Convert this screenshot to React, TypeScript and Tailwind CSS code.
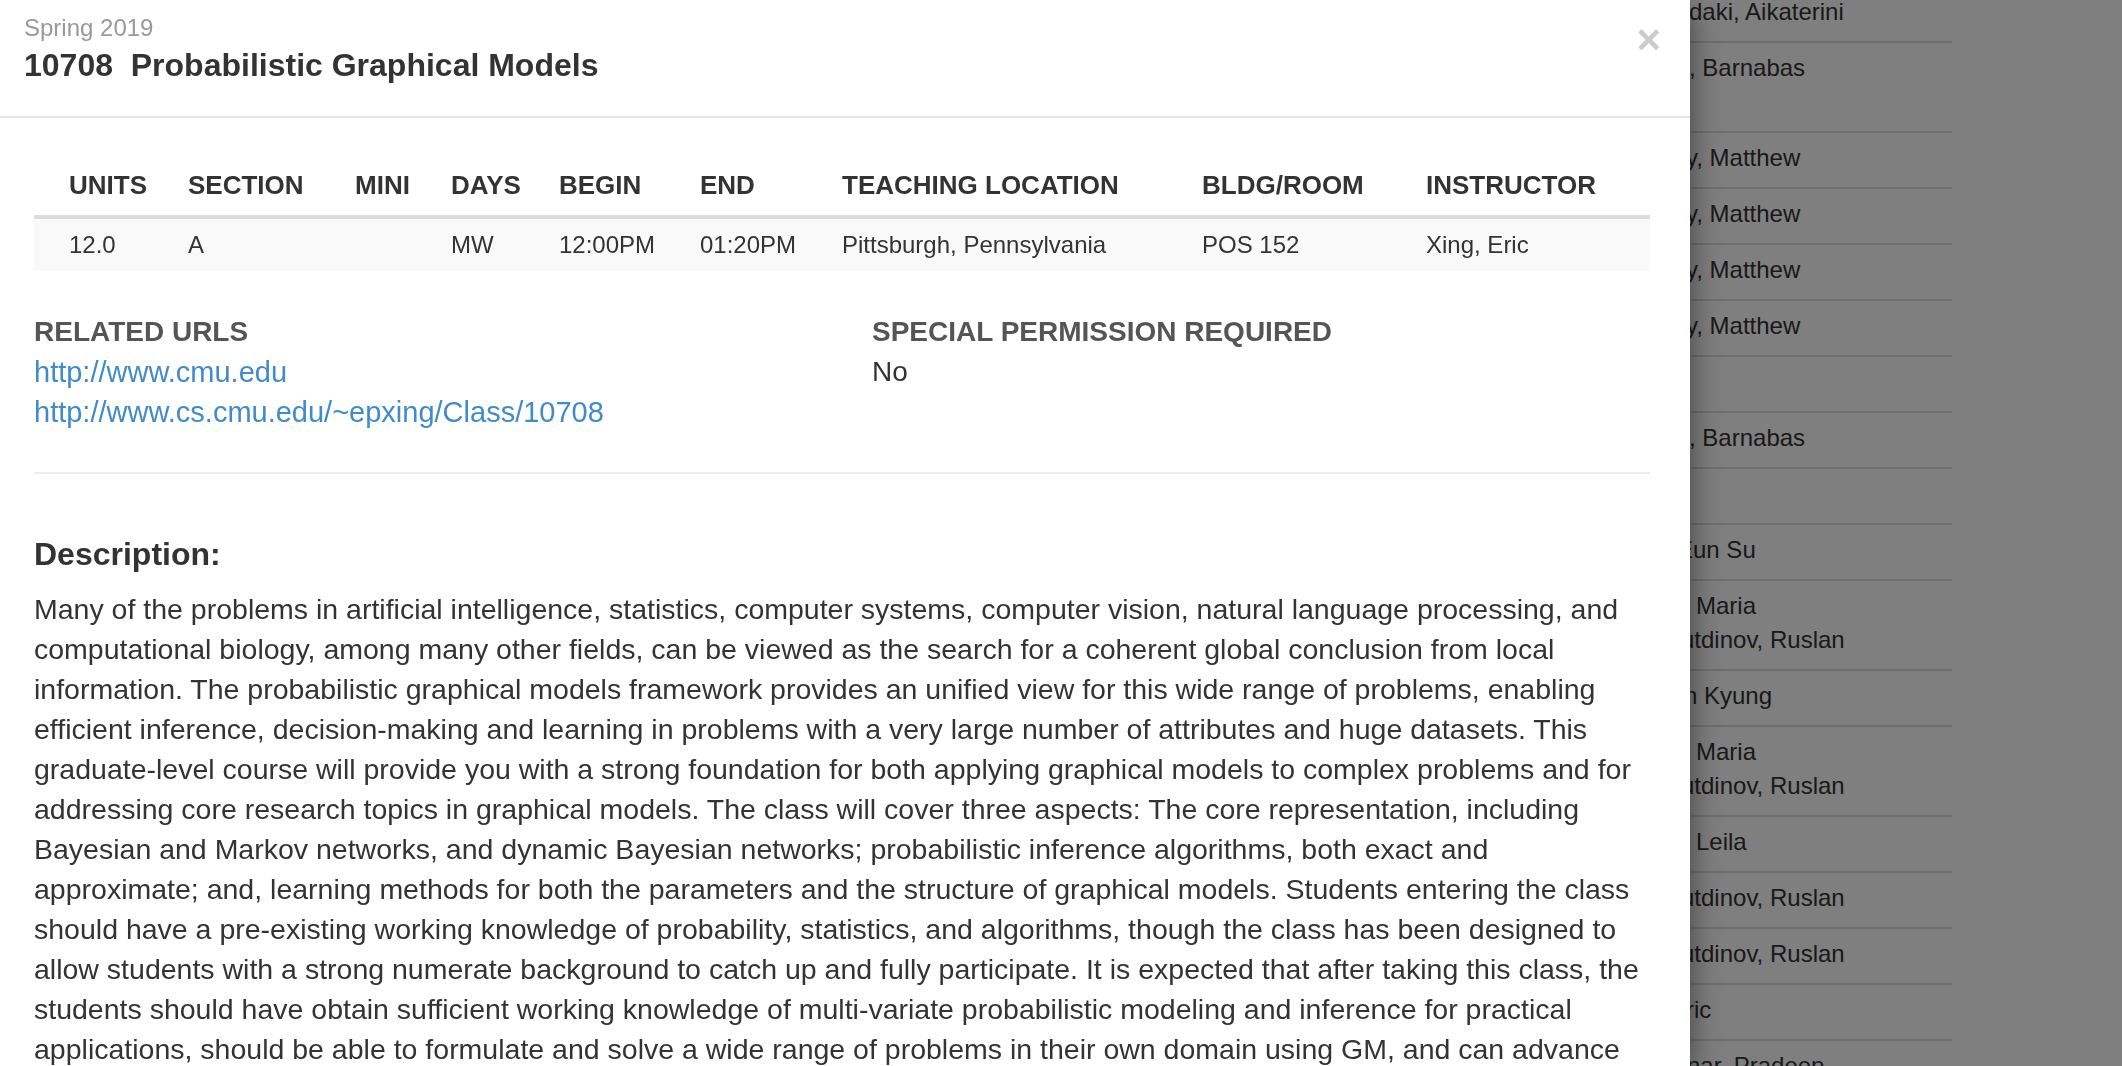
import React from "react";

// 뒤에 깔린 목록 (모달에 가려져 오른쪽 일부만 보임)
const bgRows: { text: string; ml: string }[][] = [
  [{ text: "daki, Aikaterini", ml: "ml-[29px]" }],
  [
    { text: ", Barnabas", ml: "ml-[29px]" },
    { text: "\u00a0", ml: "ml-[29px]" },
  ],
  [{ text: "y, Matthew", ml: "ml-[26px]" }],
  [{ text: "y, Matthew", ml: "ml-[26px]" }],
  [{ text: "y, Matthew", ml: "ml-[26px]" }],
  [{ text: "y, Matthew", ml: "ml-[26px]" }],
  [{ text: "\u00a0", ml: "ml-[26px]" }],
  [{ text: ", Barnabas", ml: "ml-[29px]" }],
  [{ text: "\u00a0", ml: "ml-[26px]" }],
  [{ text: "Eun Su", ml: "ml-[17px]" }],
  [
    { text: "Maria", ml: "ml-[36px]" },
    { text: "utdinov, Ruslan", ml: "ml-[21px]" },
  ],
  [{ text: "n Kyung", ml: "ml-[24px]" }],
  [
    { text: "Maria", ml: "ml-[36px]" },
    { text: "utdinov, Ruslan", ml: "ml-[21px]" },
  ],
  [{ text: "Leila", ml: "ml-[36px]" }],
  [{ text: "utdinov, Ruslan", ml: "ml-[21px]" }],
  [{ text: "utdinov, Ruslan", ml: "ml-[21px]" }],
  [{ text: "Eric", ml: "ml-[10px]" }],
  [{ text: "nar, Pradeep", ml: "ml-[27px]" }],
];

const columns = [
  { label: "UNITS", value: "12.0", w: "w-[138px]", first: true },
  { label: "SECTION", value: "A", w: "w-[167px]" },
  { label: "MINI", value: "", w: "w-[96px]" },
  { label: "DAYS", value: "MW", w: "w-[108px]" },
  { label: "BEGIN", value: "12:00PM", w: "w-[141px]" },
  { label: "END", value: "01:20PM", w: "w-[142px]" },
  { label: "TEACHING LOCATION", value: "Pittsburgh, Pennsylvania", w: "w-[360px]" },
  { label: "BLDG/ROOM", value: "POS 152", w: "w-[224px]" },
  { label: "INSTRUCTOR", value: "Xing, Eric", w: "w-[240px]" },
];

const description =
  "Many of the problems in artificial intelligence, statistics, computer systems, computer vision, natural language processing, and computational biology, among many other fields, can be viewed as the search for a coherent global conclusion from local information. The probabilistic graphical models framework provides an unified view for this wide range of problems, enabling efficient inference, decision-making and learning in problems with a very large number of attributes and huge datasets. This graduate-level course will provide you with a strong foundation for both applying graphical models to complex problems and for addressing core research topics in graphical models. The class will cover three aspects: The core representation, including Bayesian and Markov networks, and dynamic Bayesian networks; probabilistic inference algorithms, both exact and approximate; and, learning methods for both the parameters and the structure of graphical models. Students entering the class should have a pre-existing working knowledge of probability, statistics, and algorithms, though the class has been designed to allow students with a strong numerate background to catch up and fully participate. It is expected that after taking this class, the students should have obtain sufficient working knowledge of multi-variate probabilistic modeling and inference for practical applications, should be able to formulate and solve a wide range of problems in their own domain using GM, and can advance into more specialized technical literature by themselves.";

export default function App() {
  return (
    <div className="relative h-screen overflow-hidden bg-white font-['Liberation_Sans',Arial,sans-serif] text-[#333]">
      {/* 뒤 페이지 목록 */}
      <div className="-mt-[15px] flex">
        <div className="w-[1660px] shrink-0" />
        <div className="w-[292px]">
          {bgRows.map((row, i) => (
            <div
              key={i}
              className="border-t-2 border-[#ddd] pt-[8px] pb-[12px] text-[24px] leading-[34px] whitespace-nowrap"
            >
              {row.map((line, j) => (
                <div key={j} className={line.ml}>
                  {line.text}
                </div>
              ))}
            </div>
          ))}
        </div>
      </div>

      {/* 어두운 배경 */}
      <div className="fixed inset-0 bg-black/50" />

      {/* 모달 */}
      <div className="fixed left-0 top-0 bottom-0 w-[1690px] bg-white shadow-[0_10px_30px_rgba(0,0,0,0.5)]">
        {/* 모달 헤더 */}
        <div className="flex items-start justify-between border-b-2 border-[#e5e5e5] pl-[24px] pr-[29px] pt-[11px] pb-[31px]">
          <div>
            <div className="text-[24px] leading-[34px] text-[#999]">Spring 2019</div>
            <div className="text-[32px] font-bold leading-[40px] text-[#333]">
              10708&nbsp;&nbsp;Probabilistic Graphical Models
            </div>
          </div>
          <button className="mt-[8px] text-[42px] font-bold leading-[42px] text-black/20">
            ×
          </button>
        </div>

        {/* 모달 본문 */}
        <div className="pl-[34px] pr-[40px] pt-[34px]">
          <table className="w-full table-fixed border-collapse">
            <thead>
              <tr>
                {columns.map((c) => (
                  <th
                    key={c.label}
                    className={`${c.w} ${c.first ? "pl-[35px]" : "pl-[16px]"} border-b-4 border-[#ddd] pt-[16px] pb-[13px] text-left text-[26px] font-bold leading-[34px] whitespace-nowrap`}
                  >
                    {c.label}
                  </th>
                ))}
              </tr>
            </thead>
            <tbody>
              <tr className="bg-[#f9f9f9]">
                {columns.map((c) => (
                  <td
                    key={c.label}
                    className={`${c.first ? "pl-[35px]" : "pl-[16px]"} py-[9px] text-[24px] leading-[34px] whitespace-nowrap`}
                  >
                    {c.value}
                  </td>
                ))}
              </tr>
            </tbody>
          </table>

          <div className="mt-[41px] grid grid-cols-2 gap-x-[60px]">
            <div>
              <div className="text-[28px] font-bold leading-[40px] text-[#555]">RELATED URLS</div>
              <a className="block text-[29px] leading-[40px] text-[#428bca]" href="#">
                http://www.cmu.edu
              </a>
              <a className="block text-[29px] leading-[40px] text-[#428bca]" href="#">
                http://www.cs.cmu.edu/~epxing/Class/10708
              </a>
            </div>
            <div>
              <div className="text-[28px] font-bold leading-[40px] text-[#555]">
                SPECIAL PERMISSION REQUIRED
              </div>
              <div className="text-[28px] leading-[40px]">No</div>
            </div>
          </div>

          <hr className="mt-[40px] border-t-2 border-[#eee]" />

          <h3 className="mt-[60px] text-[32px] font-bold leading-[40px]">Description:</h3>
          <p className="mt-[15px] text-[28.5px] leading-[40px]">{description}</p>
        </div>
      </div>
    </div>
  );
}
